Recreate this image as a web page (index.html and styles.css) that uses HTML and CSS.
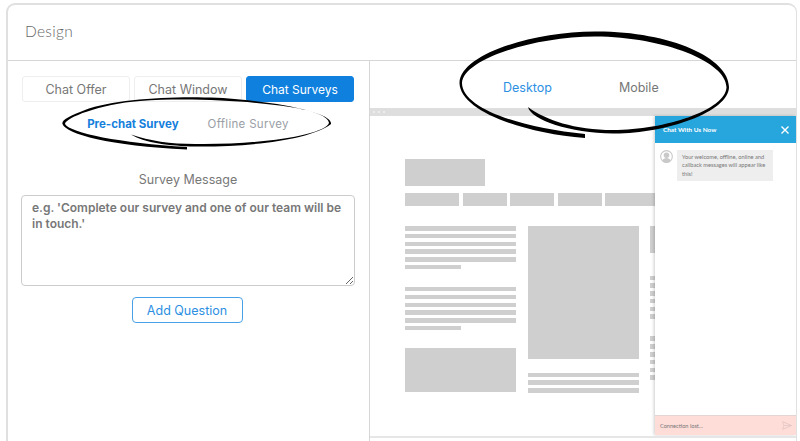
FILE: index.html
```html
<!DOCTYPE html>
<html lang="en">
<head>
    <meta charset="UTF-8">
    <meta name="viewport" content="width=device-width, initial-scale=1.0">
    <title>Design</title>
    <link rel="stylesheet" href="styles.css">
</head>
<body>
    <div class="card">
        <div class="card-title">Design</div>
        <div class="card-body">
            <div class="settings">
                <div class="tabs">
                    <div class="tab">Chat Offer</div>
                    <div class="tab">Chat Window</div>
                    <div class="tab tab-active">Chat Surveys</div>
                </div>
                <div class="subtabs">
                    <span class="subtab subtab-active">Pre-chat Survey</span>
                    <span class="subtab">Offline Survey</span>
                </div>
                <label class="field-label" for="message">Survey Message</label>
                <textarea class="field-input" id="message">e.g. 'Complete our survey and one of our team will be in touch.'</textarea>
                <button class="add-btn" type="button">Add Question</button>
            </div>

            <div class="preview">
                <div class="devices">
                    <span class="device device-active">Desktop</span>
                    <span class="device">Mobile</span>
                </div>
                <div class="browser">
                    <div class="browser-bar">
                        <i class="dot"></i><i class="dot"></i><i class="dot"></i>
                    </div>
                    <div class="mock">
                        <div class="mock-logo"></div>
                        <div class="mock-nav">
                            <i class="nav-a"></i><i class="nav-b"></i><i class="nav-b"></i><i class="nav-b"></i><i class="nav-a"></i>
                        </div>
                        <div class="mock-cols">
                            <div class="mock-col">
                                <div class="lines">
                                    <i></i><i></i><i></i><i></i><i></i><i class="short"></i>
                                </div>
                                <div class="lines">
                                    <i></i><i></i><i></i><i></i><i></i><i class="short"></i>
                                </div>
                                <div class="mock-img"></div>
                            </div>
                            <div class="mock-col">
                                <div class="mock-img mock-img-tall"></div>
                                <div class="lines">
                                    <i></i><i></i><i></i>
                                </div>
                            </div>
                            <div class="mock-col">
                                <div class="mock-img mock-img-small"></div>
                                <div class="lines">
                                    <i></i><i></i><i></i><i></i><i></i><i class="short"></i>
                                </div>
                                <div class="lines">
                                    <i></i><i></i><i></i><i></i><i></i><i class="short"></i>
                                </div>
                            </div>
                        </div>
                    </div>

                    <div class="widget">
                        <div class="widget-head">
                            <span>Chat With Us Now</span>
                            <svg class="widget-close" viewBox="0 0 10 10">
                                <path d="M1.5 1.5l7 7M8.5 1.5l-7 7"/>
                            </svg>
                        </div>
                        <div class="widget-body">
                            <svg class="avatar" viewBox="0 0 14 14">
                                <circle cx="7" cy="7" r="6.3" fill="#fff" stroke="#c9c9c9" stroke-width="1.2"/>
                                <circle cx="7" cy="5.6" r="3" fill="#c9c9c9"/>
                                <path d="M2.4 11.8c.8-2.4 2.5-3.2 4.6-3.2s3.8.8 4.6 3.2A6.3 6.3 0 0 1 2.4 11.8z" fill="#c9c9c9"/>
                            </svg>
                            <div class="bubble">Your welcome, offline, online and callback messages will appear like this!</div>
                        </div>
                        <div class="widget-foot">
                            <span>Connection lost...</span>
                            <svg class="send" viewBox="0 0 10 9">
                                <path d="M.6.6L9.4 4.5.6 8.4l1.3-3.9zM1.9 4.5h7.5"/>
                            </svg>
                        </div>
                    </div>
                </div>
            </div>
        </div>
    </div>

    <!-- hand drawn circles on top of the screenshot -->
    <svg class="scribble scribble-survey" viewBox="60 95 275 56">
        <path d="M131 134.5C145 143 170 146 195 146.5C250 147 310 140 331 124C333 114 290 104 240 99.5C195 95 120 97 85 110C70 116 61 120 62.5 124C66 134 110 146 187 149.5L187 147C120 143 70 133 65 124C65 118 100 104 140 101C190 97.5 250 101 290 107C315 111 329 117 329 123C325 135 260 145 195 144C170 144 150 141 131 134.5Z"/>
    </svg>
    <svg class="scribble scribble-device" viewBox="458 30 273 110">
        <path d="M528 107C531 120 570 133 613 133.5C665 134 729 112 729 87C729 58 670 31 595 31.5C530 32 460 55 459.5 83C460 110 520 133 585 138L585 134C520 128 462 108 462 83C463 60 530 37 595 36.5C665 37 726 62 726.5 87C726 110 665 130 613 130C575 130 545 120 528 107Z"/>
    </svg>
</body>
</html>
```

FILE: styles.css
```css
* {
    box-sizing: border-box;
}

html, body {
    height: 100%;
}

body {
    position: relative;
    margin: 0;
    padding: 3px 3px 0 6px;
    overflow: hidden;
    background: #fff;
    font-family: Inter, "Open Sans", sans-serif;
    color: #777;
}

.card {
    height: 460px;
    border: 2px solid #e0e0e0;
    border-right-width: 1px;
    border-radius: 9px;
    background: #fff;
}

.card-title {
    height: 56px;
    padding: 17px 0 0 17px;
    border-bottom: 1px solid #d6d6d6;
    font-family: Lato, sans-serif;
    font-size: 15.5px;
    font-weight: 300;
    letter-spacing: 0.3px;
    color: #666;
}

.card-body {
    display: flex;
    height: 400px;
}

/* left column */
.settings {
    display: flex;
    flex-direction: column;
    align-items: center;
    width: 362px;
    padding: 15px 14px 0 13px;
    border-right: 1px solid #d6d6d6;
}

.tabs {
    display: flex;
    gap: 4px;
    width: 332px;
}

.tab {
    flex: 1;
    height: 26px;
    border: 1px solid #eee;
    border-radius: 3px;
    font-size: 12.5px;
    line-height: 25px;
    text-align: center;
}

.tab-active {
    background: #0f80de;
    border-color: #0f80de;
    font-size: 12px;
    color: #fff;
}

.subtabs {
    display: flex;
    justify-content: center;
    gap: 29px;
    margin-top: 14px;
    font-size: 11.5px;
    line-height: 16px;
}

.subtab {
    letter-spacing: 0.3px;
    color: #9a9ea6;
}

.subtab-active {
    letter-spacing: 0;
    color: #1580dc;
    font-weight: 700;
}

.field-label {
    margin-top: 40px;
    font-size: 12.5px;
    line-height: 16px;
}

.field-input {
    display: block;
    width: 334px;
    height: 91px;
    margin-top: 7px;
    padding: 4px 10px;
    border: 1px solid #ccc;
    border-radius: 4px;
    font-family: Inter, sans-serif;
    font-size: 12px;
    font-weight: 600;
    line-height: 16px;
    color: #777;
}

.add-btn {
    width: 111px;
    height: 26px;
    margin: 11px 2px 0 0;
    padding: 0;
    border: 1.5px solid #4aa0e6;
    border-radius: 4px;
    background: #fff;
    font-family: Inter, sans-serif;
    font-size: 12.5px;
    color: #2c8fe2;
}

/* right column */
.preview {
    flex: 1;
    min-width: 0;
}

.devices {
    display: flex;
    gap: 67px;
    height: 47px;
    padding: 19px 0 0 133px;
    font-size: 12.5px;
    line-height: 16px;
}

.device-active {
    color: #2c8fe2;
}

.browser {
    position: relative;
    height: 330px;
    border-bottom: 2px solid #e6e6e6;
    overflow: hidden;
}

.browser-bar {
    display: flex;
    align-items: center;
    gap: 3px;
    height: 8px;
    padding-left: 3px;
    background: #dedede;
}

.dot {
    width: 2px;
    height: 2px;
    border-radius: 50%;
    background: #f2f2f2;
}

/* fake page behind the chat window */
.mock {
    padding: 43px 0 0 35px;
}

.mock i {
    display: block;
    background: #cfcfcf;
}

.mock-logo {
    width: 80px;
    height: 27px;
    background: #cfcfcf;
}

.mock-nav {
    display: flex;
    gap: 3.5px;
    margin-top: 7px;
}

.mock-nav i {
    height: 13px;
}

.nav-a {
    width: 54px;
}

.nav-b {
    width: 44px;
}

.mock-cols {
    display: grid;
    grid-template-columns: repeat(3, 111px);
    gap: 11.5px;
    margin-top: 20px;
}

.mock-col {
    display: flex;
    flex-direction: column;
    gap: 17.5px;
}

.lines {
    display: flex;
    flex-direction: column;
    gap: 3.3px;
}

.lines i {
    height: 4.5px;
}

.lines .short {
    width: 56px;
}

.mock-img {
    height: 44px;
    background: #cfcfcf;
}

.mock-img-tall {
    height: 133px;
    margin-bottom: -4px;
}

.mock-img-small {
    height: 27px;
    margin-bottom: 5px;
}

/* chat window */
.widget {
    position: absolute;
    top: 8px;
    right: 0;
    display: flex;
    flex-direction: column;
    width: 141px;
    height: 319px;
    background: #fff;
    box-shadow: -1px 0 3px rgba(0, 0, 0, 0.2);
    font-family: Lato, sans-serif;
}

.widget-head {
    display: flex;
    align-items: center;
    justify-content: space-between;
    height: 27px;
    padding: 0 6px 0 8px;
    background: #27a5dd;
    font-size: 6.4px;
    font-weight: 700;
    color: #fff;
}

.widget-close {
    width: 10px;
    height: 10px;
    fill: none;
    stroke: #fff;
    stroke-width: 1.4;
}

.widget-body {
    display: flex;
    flex: 1;
    gap: 4px;
    padding: 7px 23px 0 5px;
}

.avatar {
    flex: none;
    width: 13px;
    height: 13px;
}

.bubble {
    height: 31px;
    padding: 3px 5px;
    background: #eee;
    font-size: 5.7px;
    line-height: 8.4px;
    color: #777;
}

.widget-foot {
    display: flex;
    align-items: center;
    justify-content: space-between;
    height: 20px;
    padding: 0 4px 0 5px;
    border-top: 1px solid #e3d5d3;
    background: #fedcd7;
    font-size: 5.6px;
    color: #777;
}

.send {
    width: 10px;
    height: 9px;
    fill: none;
    stroke: #e2c5c1;
    stroke-width: 0.8;
}

.scribble {
    position: absolute;
    fill: #000;
}

.scribble-survey {
    left: 60px;
    top: 95px;
    width: 275px;
    height: 56px;
}

.scribble-device {
    left: 458px;
    top: 30px;
    width: 273px;
    height: 110px;
}
```
